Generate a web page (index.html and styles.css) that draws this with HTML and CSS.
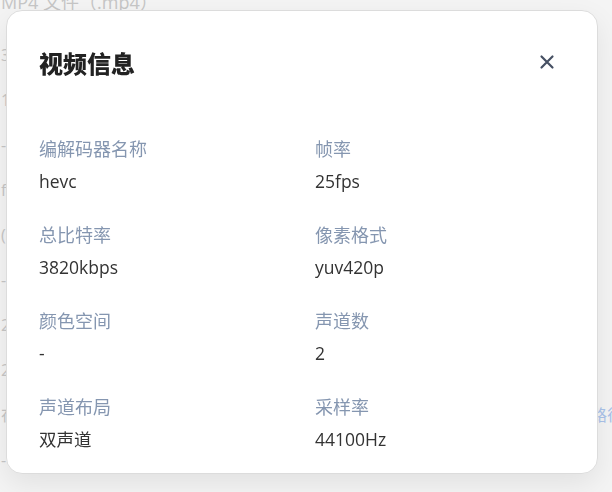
FILE: index.html
```html
<!DOCTYPE html>
<html lang="zh-CN">
<head>
    <meta charset="UTF-8">
    <meta name="viewport" content="width=device-width, initial-scale=1.0">
    <title>视频信息</title>
    <link rel="stylesheet" href="styles.css">
</head>
<body>

<!-- page underneath the dialog -->
<div class="page">
    <div class="page-line first">MP4 文件（.mp4）</div>
    <div class="page-line">3</div>
    <div class="page-line">1</div>
    <div class="page-line">-</div>
    <div class="page-line">f</div>
    <div class="page-line">(</div>
    <div class="page-line">-</div>
    <div class="page-line">2</div>
    <div class="page-line">2</div>
    <div class="page-line path-row"><span>在</span><span class="path-link">选择路径</span></div>
    <div class="page-line">-</div>
</div>

<div class="overlay">
    <div class="modal">
        <div class="modal-header">
            <h2>视频信息</h2>
            <button class="close-btn" aria-label="关闭">
                <svg width="16" height="16" viewBox="0 0 16 16" fill="none" stroke="#465063" stroke-width="2.2" stroke-linecap="round">
                    <path d="M2.5 2.5 L13.5 13.5 M13.5 2.5 L2.5 13.5"/>
                </svg>
            </button>
        </div>

        <div class="info-grid">
            <div class="info-item">
                <div class="label">编解码器名称</div>
                <div class="value">hevc</div>
            </div>
            <div class="info-item">
                <div class="label">帧率</div>
                <div class="value">25fps</div>
            </div>
            <div class="info-item">
                <div class="label">总比特率</div>
                <div class="value">3820kbps</div>
            </div>
            <div class="info-item">
                <div class="label">像素格式</div>
                <div class="value">yuv420p</div>
            </div>
            <div class="info-item">
                <div class="label">颜色空间</div>
                <div class="value">-</div>
            </div>
            <div class="info-item">
                <div class="label">声道数</div>
                <div class="value">2</div>
            </div>
            <div class="info-item">
                <div class="label">声道布局</div>
                <div class="value">双声道</div>
            </div>
            <div class="info-item">
                <div class="label">采样率</div>
                <div class="value">44100Hz</div>
            </div>
        </div>
    </div>
</div>

</body>
</html>
```

FILE: styles.css
```css
body {
    font-family: 'Open Sans', 'Noto Sans CJK SC', sans-serif;
    margin: 0;
    padding: 0;
    background-color: #f4f4f4;
    color: #333;
    overflow: hidden;
    height: 492px;
}
.page {
    padding-left: 1px;
    white-space: nowrap;
}
.page-line {
    font-size: 16px;
    line-height: 24px;
    height: 45px;
    color: #c6c6c6;
}
.page-line.first {
    font-size: 18px;
    margin-top: -10px;
    height: 53px;
}
.path-row {
    display: flex;
    width: 622px;
    justify-content: space-between;
}
.path-link {
    color: #aac3ea;
}
.overlay {
    position: fixed;
    inset: 0;
}
.modal {
    position: absolute;
    left: 6px;
    top: 10px;
    width: 592px;
    height: 464px;
    box-sizing: border-box;
    background: #fff;
    border: 1px solid #dcdcdc;
    border-radius: 16px;
    box-shadow: 0 10px 28px rgba(0, 0, 0, 0.08);
    padding: 32px 32px 22px;
}
.modal-header {
    display: flex;
    justify-content: space-between;
    align-items: center;
    height: 38px;
}
.modal-header h2 {
    margin: 0;
    font-size: 24px;
    font-weight: 900;
    color: #222;
    font-family: 'Noto Sans CJK SC', sans-serif;
}
.close-btn {
    width: 36px;
    height: 36px;
    border: none;
    background: none;
    padding: 0;
    display: flex;
    align-items: center;
    justify-content: center;
    cursor: pointer;
}
.info-grid {
    display: grid;
    grid-template-columns: 1fr 1fr;
    column-gap: 26px;
    row-gap: 30px;
    margin-top: 56px;
}
.label {
    font-size: 18px;
    line-height: 24px;
    color: #8596b0;
    margin-bottom: 8px;
}
.value {
    font-size: 17.5px;
    line-height: 24px;
    color: #333;
}
```
